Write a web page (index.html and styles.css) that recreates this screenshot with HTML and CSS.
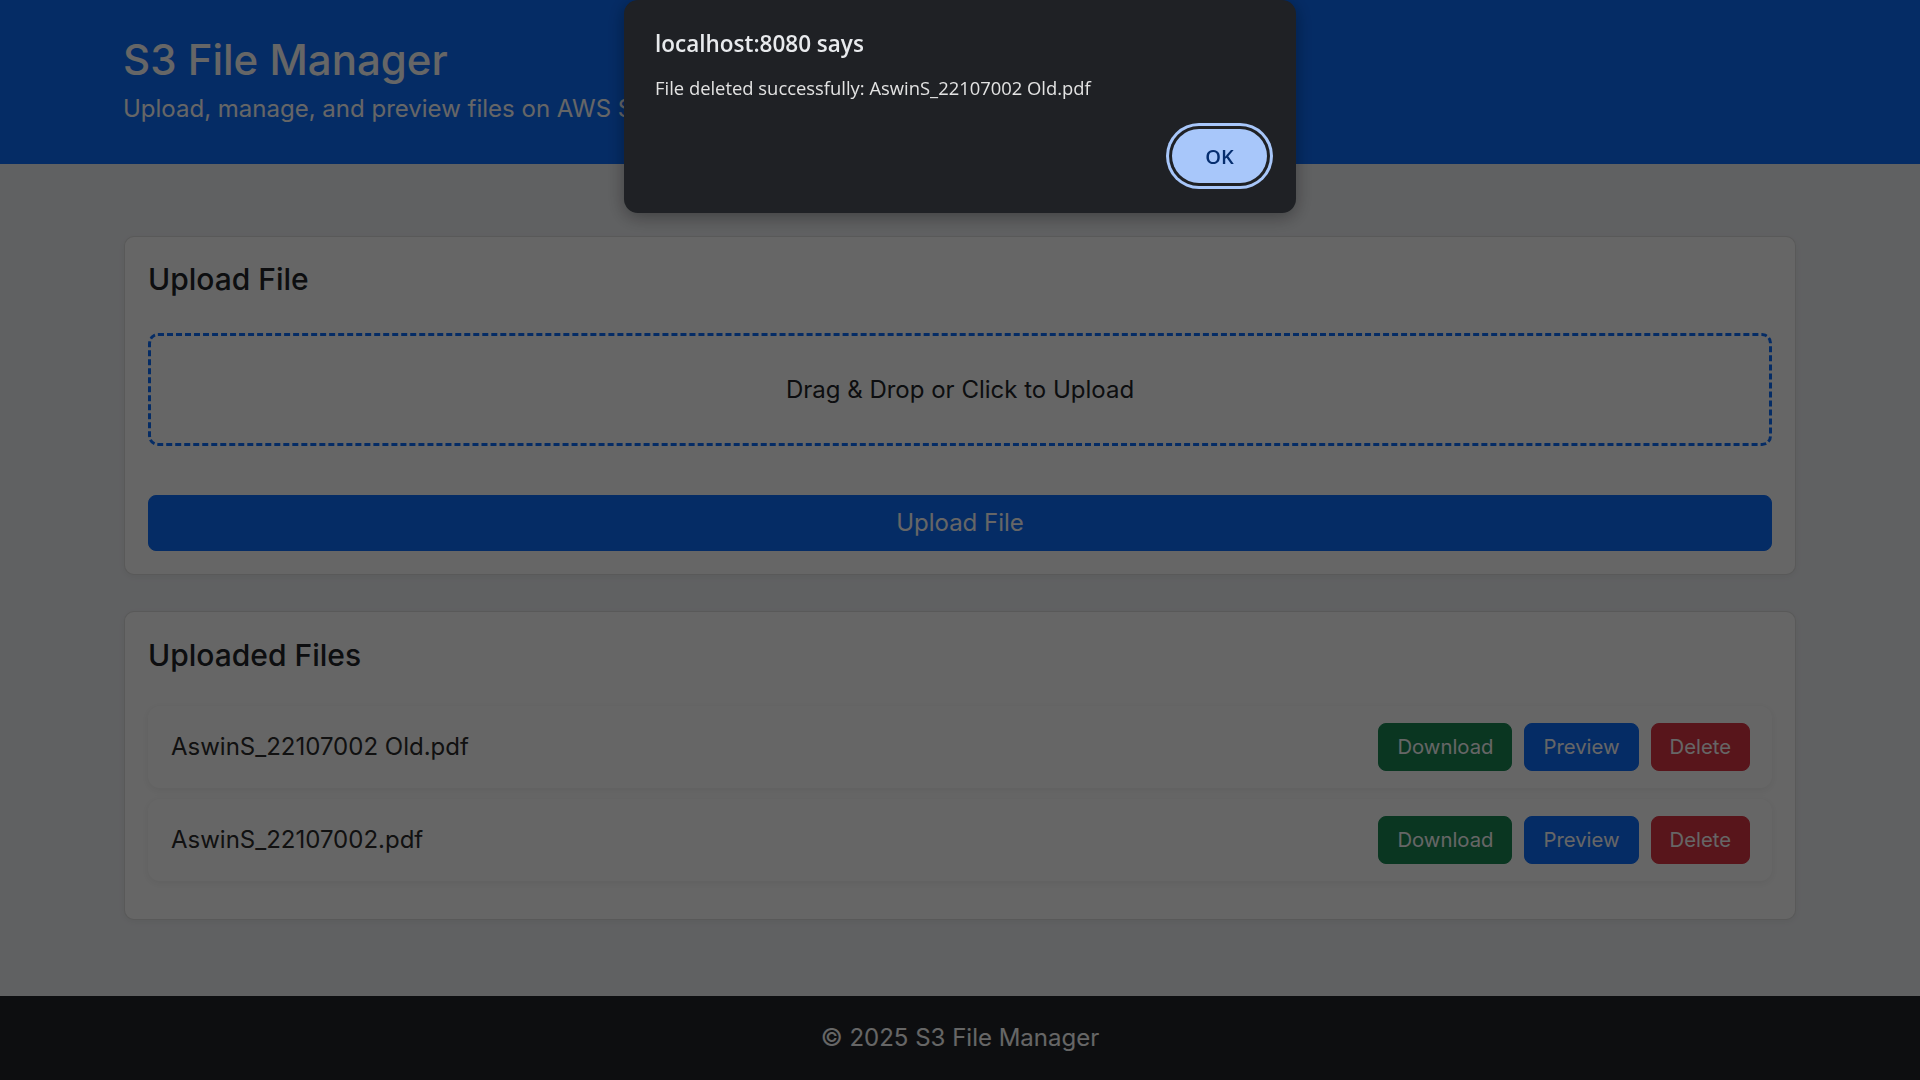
FILE: index.html
```html
<!DOCTYPE html>
<html lang="en">
<head>
<meta charset="utf-8">
<title>S3 File Manager</title>
<link rel="stylesheet" href="styles.css">
</head>
<body>
<div class="page">
  <header class="hero">
    <h1 class="hero-title">S3 File Manager</h1>
    <p class="hero-sub">Upload, manage, and preview files on AWS S3</p>
  </header>

  <main class="main">
    <section class="card upload-card">
      <h3 class="card-title">Upload File</h3>
      <div class="dropzone">Drag &amp; Drop or Click to Upload</div>
      <button class="btn btn-primary btn-block">Upload File</button>
    </section>

    <section class="card files-card">
      <h3 class="card-title files-title">Uploaded Files</h3>
      <div class="file-list">
        <div class="file-row">
          <span class="file-name">AswinS_22107002 Old.pdf</span>
          <div class="actions">
            <button class="btn btn-success">Download</button>
            <button class="btn btn-primary">Preview</button>
            <button class="btn btn-danger">Delete</button>
          </div>
        </div>
        <div class="file-row">
          <span class="file-name">AswinS_22107002.pdf</span>
          <div class="actions">
            <button class="btn btn-success">Download</button>
            <button class="btn btn-primary">Preview</button>
            <button class="btn btn-danger">Delete</button>
          </div>
        </div>
      </div>
    </section>
  </main>

  <footer class="footer">© 2025 S3 File Manager</footer>
</div>

<div class="overlay"></div>
<div class="dialog" role="alertdialog">
  <div class="dialog-title">localhost:8080 says</div>
  <div class="dialog-msg">File deleted successfully: AswinS_22107002 Old.pdf</div>
  <div class="dialog-actions">
    <button class="dialog-ok">OK</button>
  </div>
</div>
</body>
</html>
```

FILE: styles.css
```css
* { box-sizing: border-box; }

html, body {
  margin: 0;
  padding: 0;
}

body {
  font-family: Inter, "Noto Sans", sans-serif;
  background: #f0f2f5;
  color: #212529;
  width: 1920px;
  height: 1080px;
  overflow: hidden;
}

.page {
  display: flex;
  flex-direction: column;
  height: 1080px;
}

.hero {
  background: #0d6efd;
  color: #fff;
  height: 164px;
  padding: 34px 124px 0 123px;
}

.hero-title {
  margin: 0 0 6px 0;
  font-size: 42px;
  font-weight: 500;
  line-height: 52px;
}

.hero-sub {
  margin: 0;
  font-size: 24px;
  line-height: 34px;
  font-weight: 400;
}

.main {
  flex: 1;
  padding: 72px 124px 0 124px;
  display: flex;
  flex-direction: column;
  gap: 36px;
}

.card {
  background: #fff;
  border: 1px solid rgba(0, 0, 0, 0.13);
  border-radius: 10px;
  box-shadow: 0 2px 6px rgba(0, 0, 0, 0.05);
  padding: 24px 23px 23px 23px;
}

.card-title {
  margin: 0 0 35px 0;
  font-size: 30px;
  line-height: 37px;
  font-weight: 500;
  color: #212529;
}

.files-card {
  padding-top: 25px;
  padding-bottom: 27px;
}

.files-title {
  margin-bottom: 32px;
}

.dropzone {
  border: 3px dashed #0d6efd;
  border-radius: 10px;
  padding: 36px 0;
  text-align: center;
  font-size: 24px;
  line-height: 35px;
  color: #212529;
}

.btn {
  font-family: Inter, "Noto Sans", sans-serif;
  border: 1px solid transparent;
  border-radius: 8px;
  color: #fff;
  font-size: 20.3px;
  line-height: 30px;
  padding: 8px 18px;
  cursor: pointer;
}

.btn-primary { background: #0d6efd; border-color: #0d6efd; }
.btn-success { background: #198754; border-color: #198754; }
.btn-danger  { background: #dc3545; border-color: #dc3545; }

.btn-block {
  display: block;
  width: 100%;
  margin-top: 49px;
  font-size: 24px;
  line-height: 34px;
  padding: 10px 18px;
}

.file-row {
  display: flex;
  align-items: center;
  justify-content: space-between;
  background: #fff;
  border-radius: 12px;
  box-shadow: 0 2px 8px rgba(0, 0, 0, 0.07);
  padding: 17px 22px 17px 23px;
  margin-bottom: 11px;
}

.file-name {
  font-size: 24px;
  line-height: 34px;
  color: #2b2b2b;
}

.actions {
  display: flex;
  gap: 12px;
}

.footer {
  height: 84px;
  background: #212529;
  color: #fff;
  text-align: center;
  font-size: 24px;
  line-height: 84px;
}

.overlay {
  position: fixed;
  inset: 0;
  background: rgba(0, 0, 0, 0.6);
}

.dialog {
  position: fixed;
  top: 0;
  left: 624px;
  width: 672px;
  height: 213px;
  background: #1f2125;
  border-radius: 14px;
  box-shadow: 0 4px 18px rgba(0, 0, 0, 0.35);
  padding: 28px 29px 30px 31px;
  font-family: "Open Sans", "Noto Sans", sans-serif;
  color: #e3e3e3;
  display: flex;
  flex-direction: column;
}

.dialog-title {
  font-size: 22.5px;
  line-height: 32px;
  font-weight: 600;
  color: #e8eaed;
  margin-bottom: 14px;
}

.dialog-msg {
  font-size: 18.4px;
  line-height: 28px;
  color: #e3e3e3;
}

.dialog-actions {
  display: flex;
  justify-content: flex-end;
  margin-top: auto;
}

.dialog-ok {
  width: 95px;
  height: 54px;
  border: none;
  border-radius: 27px;
  background: #a8c7fa;
  color: #062e6f;
  font-family: "Open Sans", "Noto Sans", sans-serif;
  font-size: 20px;
  font-weight: 600;
  box-shadow: 0 0 0 3px #1f2125, 0 0 0 6px #a8c7fa;
}
```
